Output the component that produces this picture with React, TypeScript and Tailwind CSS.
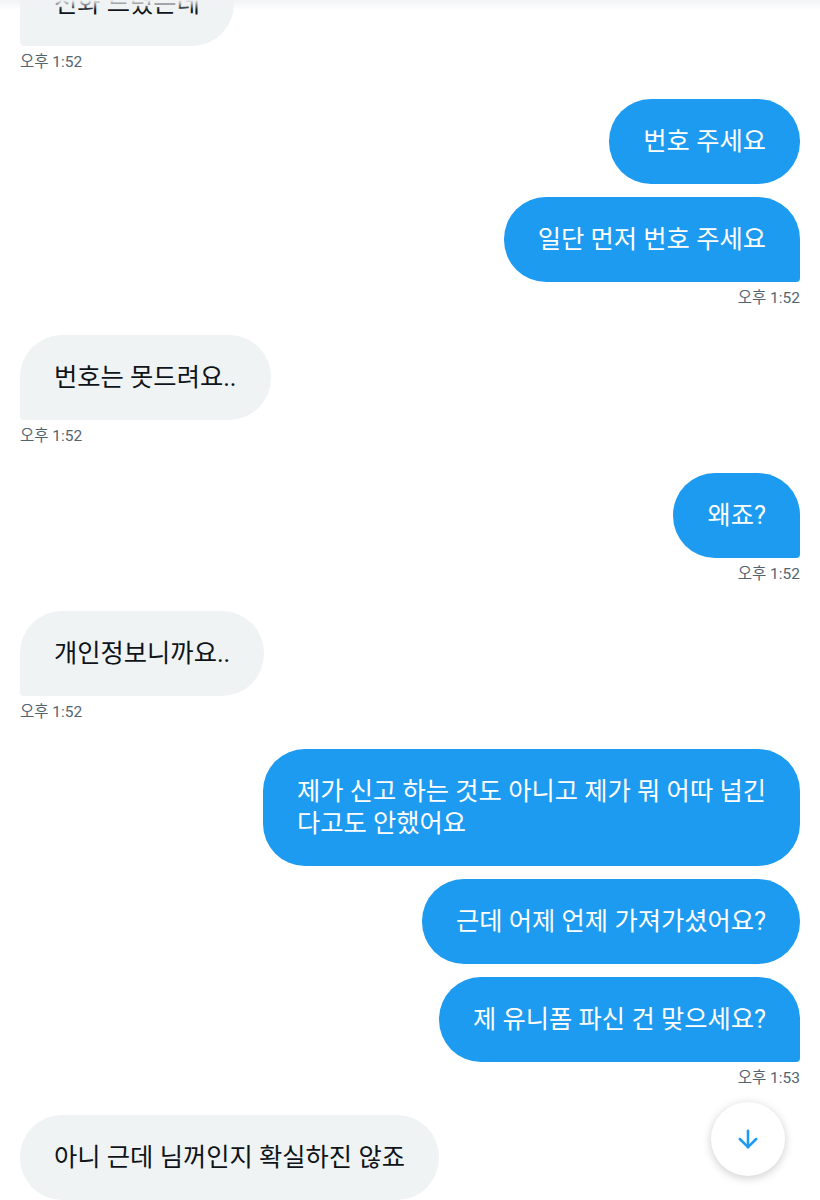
import React from 'react';
import { ArrowDown } from 'lucide-react';

type Msg = { id: number; mine: boolean; text: string; last?: boolean; time?: string };

const messages: Msg[] = [
  { id: 0, mine: false, text: '전화 드렸는데', last: true, time: '오후 1:52' },
  { id: 1, mine: true, text: '번호 주세요' },
  { id: 2, mine: true, text: '일단 먼저 번호 주세요', last: true, time: '오후 1:52' },
  { id: 3, mine: false, text: '번호는 못드려요..', last: true, time: '오후 1:52' },
  { id: 4, mine: true, text: '왜죠?', last: true, time: '오후 1:52' },
  { id: 5, mine: false, text: '개인정보니까요..', last: true, time: '오후 1:52' },
  { id: 6, mine: true, text: '제가 신고 하는 것도 아니고 제가 뭐 어따 넘긴\n다고도 안했어요' },
  { id: 7, mine: true, text: '근데 어제 언제 가져가셨어요?' },
  { id: 8, mine: true, text: '제 유니폼 파신 건 맞으세요?', last: true, time: '오후 1:53' },
  { id: 9, mine: false, text: '아니 근데 님꺼인지 확실하진 않죠' },
];

const Bubble: React.FC<{ m: Msg }> = ({ m }) => {
  const base =
    'max-w-[560px] px-[34px] py-[26.5px] text-[25.3px] leading-[32px] rounded-[42px] whitespace-pre-line';
  const cls = m.mine
    ? `${base} bg-[#1d9bf0] text-white ${m.last ? 'rounded-br-[4px]' : ''}`
    : `${base} bg-[#eff3f4] text-[#0f1419] ${m.last ? 'rounded-bl-[4px]' : ''}`;
  return (
    <div className={`flex flex-col ${m.mine ? 'items-end' : 'items-start'} ${m.last ? 'mb-[27px]' : 'mb-[13px]'}`}>
      <div className={cls}>{m.text}</div>
      {m.time && (
        <div className="mt-[6px] text-[15.5px] leading-[20px] text-[#536471]">{m.time}</div>
      )}
    </div>
  );
};

export default function App() {
  return (
    <div
      className="relative h-[1200px] w-[820px] overflow-hidden bg-white"
      style={{ fontFamily: "Roboto, 'Noto Sans CJK KR', sans-serif" }}
    >
      <div className="absolute inset-x-0 top-0 z-10 h-[10px] bg-gradient-to-b from-[#f1f3f5] to-transparent" />
      <div className="mt-[-39px] flex flex-col px-5">
        {messages.map((m) => (
          <Bubble key={m.id} m={m} />
        ))}
      </div>
      <button className="absolute bottom-[24px] right-[35px] flex h-[74px] w-[74px] items-center justify-center rounded-full bg-white shadow-[0_2px_10px_rgba(0,0,0,0.2)]">
        <ArrowDown size={28} strokeWidth={2.2} className="text-[#1d9bf0]" />
      </button>
    </div>
  );
}
